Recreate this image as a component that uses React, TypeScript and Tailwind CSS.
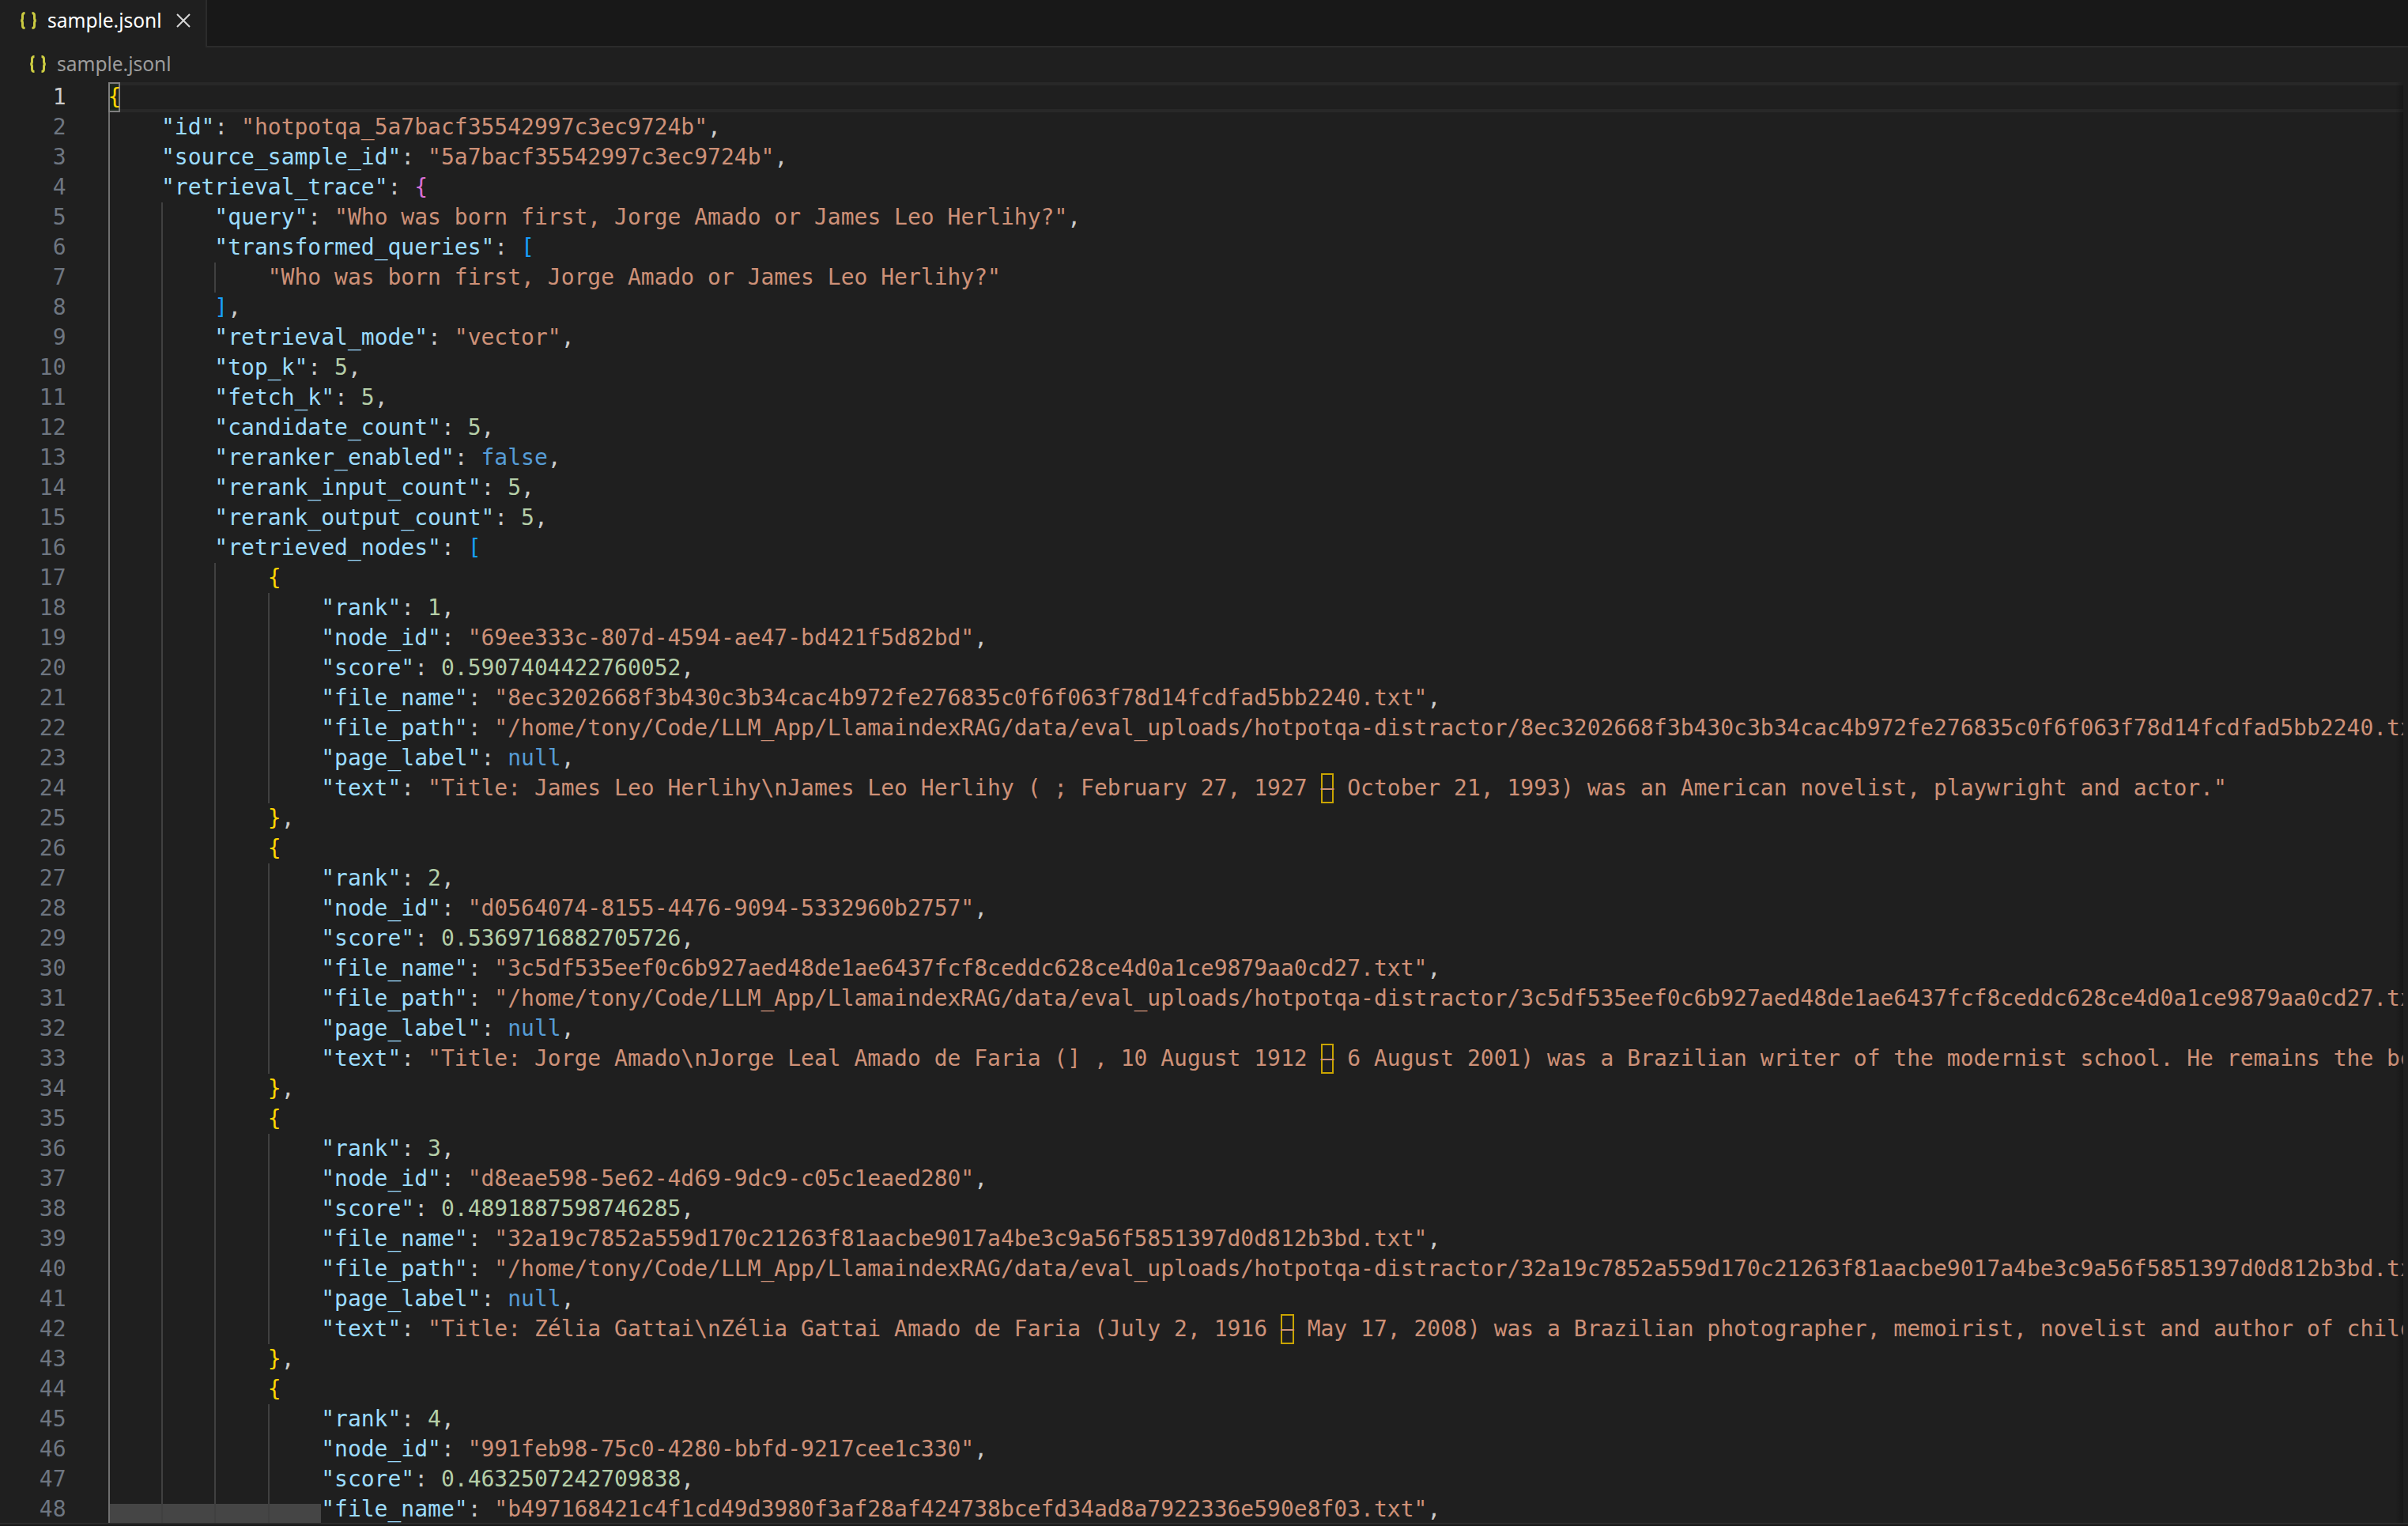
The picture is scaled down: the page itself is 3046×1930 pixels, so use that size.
const source = [
  `{`,
  `    "id": "hotpotqa_5a7bacf35542997c3ec9724b",`,
  `    "source_sample_id": "5a7bacf35542997c3ec9724b",`,
  `    "retrieval_trace": {`,
  `        "query": "Who was born first, Jorge Amado or James Leo Herlihy?",`,
  `        "transformed_queries": [`,
  `            "Who was born first, Jorge Amado or James Leo Herlihy?"`,
  `        ],`,
  `        "retrieval_mode": "vector",`,
  `        "top_k": 5,`,
  `        "fetch_k": 5,`,
  `        "candidate_count": 5,`,
  `        "reranker_enabled": false,`,
  `        "rerank_input_count": 5,`,
  `        "rerank_output_count": 5,`,
  `        "retrieved_nodes": [`,
  `            {`,
  `                "rank": 1,`,
  `                "node_id": "69ee333c-807d-4594-ae47-bd421f5d82bd",`,
  `                "score": 0.5907404422760052,`,
  `                "file_name": "8ec3202668f3b430c3b34cac4b972fe276835c0f6f063f78d14fcdfad5bb2240.txt",`,
  `                "file_path": "/home/tony/Code/LLM_App/LlamaindexRAG/data/eval_uploads/hotpotqa-distractor/8ec3202668f3b430c3b34cac4b972fe276835c0f6f063f78d14fcdfad5bb2240.txt",`,
  `                "page_label": null,`,
  `                "text": "Title: James Leo Herlihy\\nJames Leo Herlihy ( ; February 27, 1927 – October 21, 1993) was an American novelist, playwright and actor."`,
  `            },`,
  `            {`,
  `                "rank": 2,`,
  `                "node_id": "d0564074-8155-4476-9094-5332960b2757",`,
  `                "score": 0.5369716882705726,`,
  `                "file_name": "3c5df535eef0c6b927aed48de1ae6437fcf8ceddc628ce4d0a1ce9879aa0cd27.txt",`,
  `                "file_path": "/home/tony/Code/LLM_App/LlamaindexRAG/data/eval_uploads/hotpotqa-distractor/3c5df535eef0c6b927aed48de1ae6437fcf8ceddc628ce4d0a1ce9879aa0cd27.txt",`,
  `                "page_label": null,`,
  `                "text": "Title: Jorge Amado\\nJorge Leal Amado de Faria (] , 10 August 1912 – 6 August 2001) was a Brazilian writer of the modernist school. He remains the best known of modern Brazilian writers."`,
  `            },`,
  `            {`,
  `                "rank": 3,`,
  `                "node_id": "d8eae598-5e62-4d69-9dc9-c05c1eaed280",`,
  `                "score": 0.4891887598746285,`,
  `                "file_name": "32a19c7852a559d170c21263f81aacbe9017a4be3c9a56f5851397d0d812b3bd.txt",`,
  `                "file_path": "/home/tony/Code/LLM_App/LlamaindexRAG/data/eval_uploads/hotpotqa-distractor/32a19c7852a559d170c21263f81aacbe9017a4be3c9a56f5851397d0d812b3bd.txt",`,
  `                "page_label": null,`,
  `                "text": "Title: Zélia Gattai\\nZélia Gattai Amado de Faria (July 2, 1916 – May 17, 2008) was a Brazilian photographer, memoirist, novelist and author of children's literature."`,
  `            },`,
  `            {`,
  `                "rank": 4,`,
  `                "node_id": "991feb98-75c0-4280-bbfd-9217cee1c330",`,
  `                "score": 0.4632507242709838,`,
  `                "file_name": "b497168421c4f1cd49d3980f3af28af424738bcefd34ad8a7922336e590e8f03.txt",`,
];

const bracketColors = ["text-[#ffd700]", "text-[#da70d6]", "text-[#179fff]"];
const tokenPattern = /("(?:[^"\\]|\\.)*")(:)?|(-?\d+(?:\.\d+)?)|(true|false|null)|([{}\[\]])|([,:\s]+)/g;

type Token = { text: string; color: string };

function tokenize(code: string, nesting: { level: number }): Token[] {
  const tokens: Token[] = [];
  for (const m of code.matchAll(tokenPattern)) {
    if (m[1]) {
      tokens.push({ text: m[1], color: m[2] ? "text-[#9cdcfe]" : "text-[#ce9178]" });
      if (m[2]) tokens.push({ text: ":", color: "text-[#cccccc]" });
    } else if (m[3]) {
      tokens.push({ text: m[3], color: "text-[#b5cea8]" });
    } else if (m[4]) {
      tokens.push({ text: m[4], color: "text-[#569cd6]" });
    } else if (m[5]) {
      const opening = m[5] === "{" || m[5] === "[";
      if (!opening) nesting.level -= 1;
      tokens.push({ text: m[5], color: bracketColors[nesting.level % 3] });
      if (opening) nesting.level += 1;
    } else {
      tokens.push({ text: m[6], color: "text-[#cccccc]" });
    }
  }
  return tokens;
}

function FileIcon() {
  return (
    <svg width="22" height="22" viewBox="0 0 22 22" fill="none" stroke="#cbcb41" strokeWidth="3" className="shrink-0">
      <path d="M6.500 1.500C4 1.500 3.500 2.500 3.500 4.500v3.500c0 1.800-.8 3-2.300 3 1.500 0 2.300 1.200 2.300 3v3.500c0 2 .5 3 3 3" />
      <path d="M15.500 1.500c2.500 0 3 1 3 3v3.500c0 1.800.8 3 2.300 3-1.500 0-2.300 1.200-2.300 3v3.500c0 2-.5 3-3 3" />
    </svg>
  );
}

function StringText({ text }: { text: string }) {
  const parts = text.split("–");
  if (parts.length === 1) return <>{text}</>;
  return (
    <>
      {parts[0]}
      <span className="inline-block h-[38px] w-[1ch] align-top shadow-[inset_0_0_0_2px_#c9a400]">–</span>
      {parts[1]}
    </>
  );
}

function CodeLine({ code, index, nesting }: { code: string; index: number; nesting: { level: number } }) {
  const trimmed = code.trimStart();
  const depth = (code.length - trimmed.length) / 4;
  const tokens = tokenize(trimmed, nesting);
  const isFirst = index === 0;
  const isLast = index === source.length - 1;

  return (
    <div className="flex h-[38px]">
      <div className={`w-[136.500px] shrink-0 pr-[53px] text-right ${isFirst ? "text-[#cccccc]" : "text-[#6e7681]"}`}>
        {index + 1}
      </div>
      <div
        className={`flex min-w-0 flex-1 overflow-hidden whitespace-pre ${
          isFirst ? "shadow-[inset_0_4px_0_#282828,inset_0_-4px_0_#282828]" : ""
        }`}
      >
        {depth > 0 && (
          <div className="relative flex shrink-0">
            {isLast && <div className="absolute inset-x-0 top-3 bottom-0 bg-[#454545]" />}
            {Array.from({ length: depth }, (_, level) => (
              <span
                key={level}
                className={`relative h-[38px] w-[4ch] border-l-2 ${level === 0 ? "border-[#707070]" : "border-[#404040]"}`}
              />
            ))}
          </div>
        )}
        <div>
          {tokens.map((token, i) =>
            isFirst ? (
              <span
                key={i}
                className={`inline-block h-[38px] w-[15.500px] overflow-visible bg-[#0064001a] align-top shadow-[inset_0_0_0_2px_#7f7f7f] ${token.color}`}
              >
                {token.text}
              </span>
            ) : (
              <span key={i} className={token.color}>
                <StringText text={token.text} />
              </span>
            ),
          )}
        </div>
      </div>
    </div>
  );
}

export default function App() {
  const nesting = { level: 0 };

  return (
    <div className="flex h-[1930px] w-[3046px] flex-col overflow-hidden bg-[#1f1f1f]">
      {/* Tabs */}
      <div className="h-[60px] shrink-0 border-b-2 border-[#2b2b2b] bg-[#181818]">
        <div className="flex h-[60px] w-[262px] items-center border-r-2 border-[#2b2b2b] bg-[#1f1f1f] pb-[8px] pl-[25px] font-['Noto_Sans',sans-serif] text-[24.500px] text-white">
          <FileIcon />
          <span className="ml-[13px]">sample.jsonl</span>
          <svg width="18" height="18" viewBox="0 0 18 18" stroke="#d8d8d8" strokeWidth="2" className="ml-[18px] shrink-0">
            <path d="M1 1l16 16M17 1L1 17" />
          </svg>
        </div>
      </div>

      {/* Breadcrumb */}
      <div className="flex h-[44px] shrink-0 items-center pb-[2px] pl-[37px] font-['Noto_Sans',sans-serif] text-[24.500px] text-[#9d9d9d]">
        <FileIcon />
        <span className="ml-[13px]">sample.jsonl</span>
      </div>

      {/* Editor */}
      <div className="relative h-[1822px] shrink-0 overflow-hidden pr-[6px] font-['DejaVu_Sans_Mono',monospace] text-[28px] leading-[38px]">
        {source.map((code, index) => (
          <CodeLine key={index} code={code} index={index} nesting={nesting} />
        ))}
        <div className="absolute top-0 right-[6px] bottom-0 w-[10px] bg-gradient-to-r from-transparent to-black/25" />
      </div>

      <div className="h-[4px] shrink-0 border-t-2 border-[#2b2b2b] bg-[#181818]" />
    </div>
  );
}
